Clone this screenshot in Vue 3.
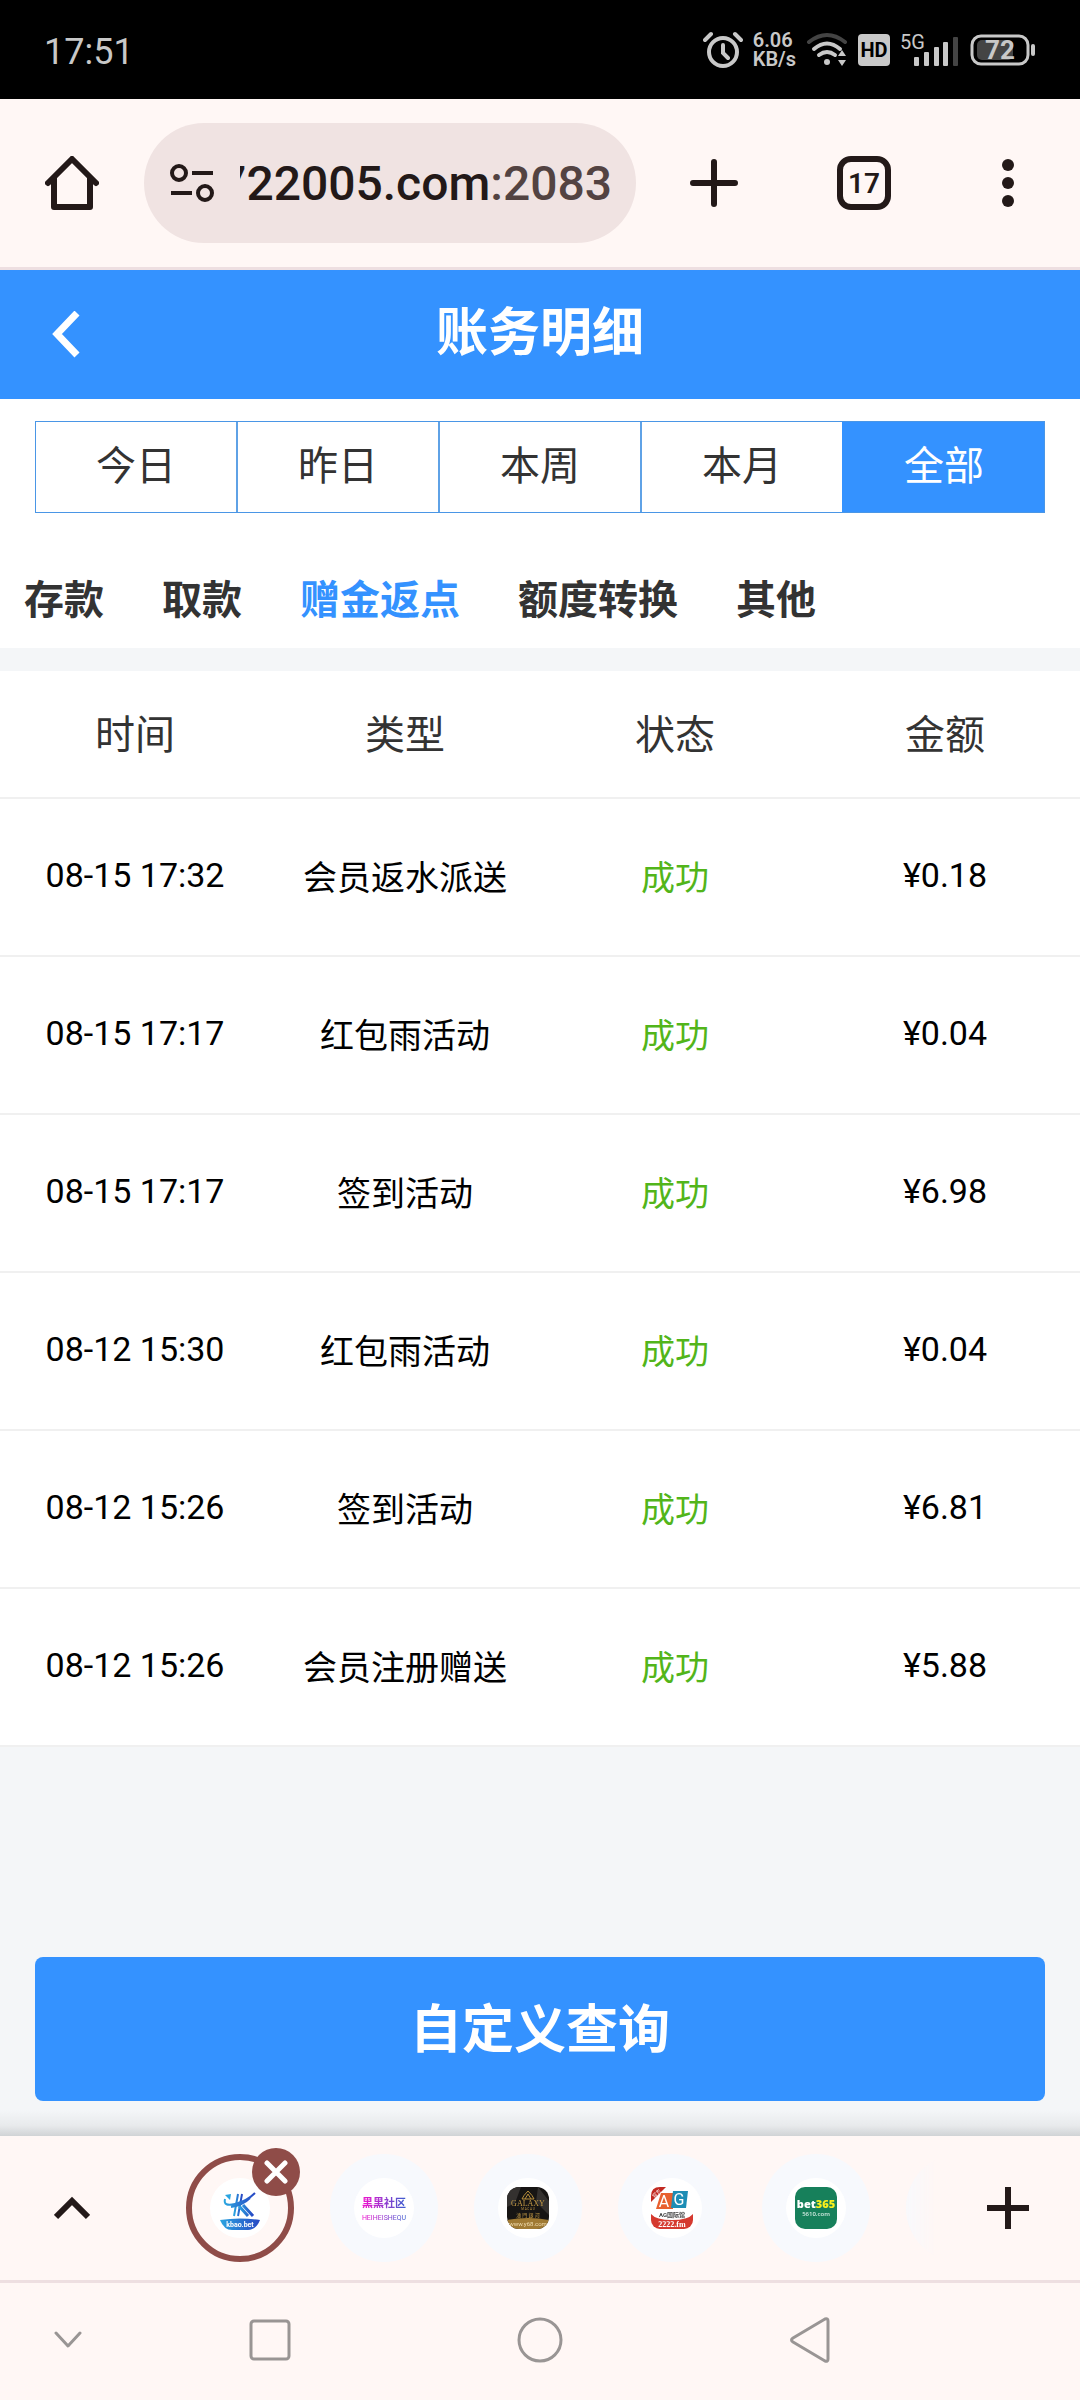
<script setup>
import { ref } from "vue";

const periods = ["今日", "昨日", "本周", "本月", "全部"];
const activePeriod = ref("全部");

const categories = ["存款", "取款", "赠金返点", "额度转换", "其他"];
const activeCategory = ref("赠金返点");

const columns = ["时间", "类型", "状态", "金额"];

const records = [
    { id: 1, time: "08-15 17:32", type: "会员返水派送", status: "成功", amount: "¥0.18" },
    { id: 2, time: "08-15 17:17", type: "红包雨活动", status: "成功", amount: "¥0.04" },
    { id: 3, time: "08-15 17:17", type: "签到活动", status: "成功", amount: "¥6.98" },
    { id: 4, time: "08-12 15:30", type: "红包雨活动", status: "成功", amount: "¥0.04" },
    { id: 5, time: "08-12 15:26", type: "签到活动", status: "成功", amount: "¥6.81" },
    { id: 6, time: "08-12 15:26", type: "会员注册赠送", status: "成功", amount: "¥5.88" }
];
</script>

<template>
  <div class="screen">
    <div class="status">
      <span class="status__time">17:51</span>
      <div class="status__icons">
        <svg width="40" height="38" viewBox="0 0 40 38" fill="none" stroke="#c8c8c8" stroke-width="4" stroke-linecap="round">
          <circle cx="20" cy="21" r="14" />
          <path d="M20 14v8l5 5M2 9l6-6M38 9l-6-6" />
        </svg>
        <div class="status__speed">
          <span>6.06</span>
          <span>KB/s</span>
        </div>
        <svg width="42" height="36" viewBox="0 0 42 36" fill="none" stroke-linecap="round" stroke-width="4">
          <path d="M3 10Q21 -4 39 10" stroke="#444" />
          <path d="M8 17Q21 6 34 17M13 23Q21 17 29 23" stroke="#c8c8c8" />
          <circle cx="21" cy="30" r="3" fill="#c8c8c8" />
          <path d="M32 24l4-6 4 6zM32 28l4 6 4-6z" fill="#c8c8c8" />
        </svg>
        <svg width="32" height="32" viewBox="0 0 32 32">
          <rect width="32" height="32" rx="4" fill="#c8c8c8" />
          <text x="16" y="23" text-anchor="middle" font-size="20" font-weight="700" fill="#000">HD</text>
        </svg>
        <svg width="60" height="38" viewBox="0 0 60 38">
          <text x="0" y="18" font-size="20" fill="#c8c8c8">5G</text>
          <g fill="#c8c8c8">
            <rect x="14" y="26" width="5" height="9" rx="1" />
            <rect x="24" y="21" width="5" height="14" rx="1" />
            <rect x="34" y="16" width="5" height="19" rx="1" />
            <rect x="43" y="11" width="5" height="24" rx="1" />
          </g>
          <rect x="53" y="6" width="5" height="29" rx="1" fill="#444" />
        </svg>
        <svg width="66" height="32" viewBox="0 0 66 32">
          <rect x="2" y="2" width="56" height="28" rx="9" fill="none" stroke="#c8c8c8" stroke-width="3" />
          <rect x="7" y="6" width="36" height="20" rx="5" fill="#444" />
          <rect x="61" y="10" width="4" height="12" rx="2" fill="#c8c8c8" />
          <text x="30" y="25" text-anchor="middle" font-size="26" font-weight="700" fill="#c8c8c8">72</text>
        </svg>
      </div>
    </div>

    <div class="browser">
      <button class="browser__button" type="button" aria-label="Home">
        <svg width="54" height="54" viewBox="0 0 54 54" fill="none" stroke="#231918" stroke-width="6" stroke-linecap="round" stroke-linejoin="round">
          <path d="M3 27L27 3l24 24M9 22v29h36V22" />
        </svg>
      </button>
      <button class="browser__address" type="button">
        <svg width="48" height="42" viewBox="0 0 48 42" fill="none" stroke="#231918" stroke-width="4">
          <circle cx="11" cy="11" r="7" />
          <path d="M24 11h21M3 31h21" />
          <circle cx="37" cy="31" r="7" />
        </svg>
        <span class="browser__url">
          <span>722005.com</span><span class="browser__port">:2083</span>
        </span>
      </button>
      <button class="browser__button browser__button--add" type="button" aria-label="New tab">
        <svg width="48" height="48" viewBox="0 0 48 48" stroke="#231918" stroke-width="6" stroke-linecap="round">
          <path d="M24 3v42M3 24h42" />
        </svg>
      </button>
      <button class="browser__button" type="button" aria-label="Tabs">
        <span class="browser__tabs">17</span>
      </button>
      <button class="browser__button" type="button" aria-label="Menu">
        <svg width="12" height="50" viewBox="0 0 12 50" fill="#231918">
          <circle cx="6" cy="7" r="6" />
          <circle cx="6" cy="25" r="6" />
          <circle cx="6" cy="43" r="6" />
        </svg>
      </button>
    </div>

    <main class="page">
      <header class="header">
        <button class="header__back" type="button" aria-label="返回">
          <svg width="28" height="48" viewBox="0 0 28 48" fill="none" stroke="#fff" stroke-width="7">
            <path d="M25 2L5 23l20 21" />
          </svg>
        </button>
        <h1 class="header__title">账务明细</h1>
      </header>

      <div class="filters">
        <div class="periods">
          <button
            v-for="period in periods"
            :key="period"
            class="periods__item"
            :class="{ 'periods__item--active': period === activePeriod }"
            type="button"
            @click="activePeriod = period"
          >
            {{ period }}
          </button>
        </div>
        <div class="categories">
          <button
            v-for="category in categories"
            :key="category"
            class="categories__item"
            :class="{ 'categories__item--active': category === activeCategory }"
            type="button"
            @click="activeCategory = category"
          >
            {{ category }}
          </button>
        </div>
      </div>

      <table class="records">
        <thead>
          <tr>
            <th v-for="column in columns" :key="column">{{ column }}</th>
          </tr>
        </thead>
        <tbody>
          <tr v-for="record in records" :key="record.id">
            <td>{{ record.time }}</td>
            <td>{{ record.type }}</td>
            <td class="records__status">{{ record.status }}</td>
            <td>{{ record.amount }}</td>
          </tr>
        </tbody>
      </table>

      <div class="actions">
        <button class="actions__query" type="button">自定义查询</button>
      </div>
      <div class="shade"></div>
    </main>

    <div class="tabstrip">
      <button class="tabstrip__button" type="button" aria-label="Expand">
        <svg width="36" height="24" viewBox="0 0 36 24" fill="none" stroke="#231918" stroke-width="6">
          <path d="M2 21L18 5l16 16" />
        </svg>
      </button>
      <div class="tabstrip__list">
        <div class="tabstrip__item tabstrip__item--active">
          <svg width="60" height="60" viewBox="0 0 60 60">
            <defs>
              <linearGradient id="kbao" x1="0" x2="1">
                <stop offset="0" stop-color="#2ba5e0" />
                <stop offset="1" stop-color="#2747c4" />
              </linearGradient>
            </defs>
            <circle cx="30" cy="30" r="30" fill="#fff" />
            <g fill="none" stroke="url(#kbao)">
              <path d="M28 16l-4 22M32 16l-4 22" stroke-width="2" />
              <path d="M33 27l10 11M29 28l9 10" stroke-width="3" />
              <path d="M15 21q-2 8 10 5 12-3 20-11M21 29q12-2 19-9" stroke-width="2" />
            </g>
            <path d="M15 17l6-1-1 6z" fill="#2ba5e0" />
            <path d="M10 42q20-3 40 0-4 10-12 10H22q-8 0-12-10z" fill="url(#kbao)" />
            <text x="30" y="49" text-anchor="middle" font-size="7" font-weight="700" fill="#fff">kbao.bet</text>
          </svg>
          <button class="tabstrip__close" type="button" aria-label="Close tab">
            <svg width="24" height="24" viewBox="0 0 24 24" stroke="#fff" stroke-width="5" stroke-linecap="round">
              <path d="M3 3l18 18M21 3L3 21" />
            </svg>
          </button>
        </div>
        <div class="tabstrip__item">
          <svg width="60" height="60" viewBox="0 0 60 60">
            <defs>
              <linearGradient id="heihei" x1="0" x2="1">
                <stop offset="0" stop-color="#f312ce" />
                <stop offset="1" stop-color="#3a5fd0" />
              </linearGradient>
            </defs>
            <circle cx="30" cy="30" r="30" fill="#fff" />
            <text x="30" y="29" text-anchor="middle" font-size="11" font-weight="700" fill="url(#heihei)">黑黑社区</text>
            <text x="30" y="42" text-anchor="middle" font-size="7" fill="url(#heihei)">HEIHEISHEQU</text>
          </svg>
        </div>
        <div class="tabstrip__item">
          <svg width="60" height="60" viewBox="0 0 60 60">
            <defs>
              <clipPath id="galaxy"><rect x="9" y="9" width="42" height="42" rx="12" /></clipPath>
            </defs>
            <circle cx="30" cy="30" r="30" fill="#fff" />
            <g clip-path="url(#galaxy)">
              <rect x="9" y="9" width="42" height="42" fill="#171514" />
              <path d="M9 9h14l-6 16-8 4zM40 9l11 14v14L38 24z" fill="#34312f" />
              <path d="M9 42q21-4 42 0v9H9z" fill="#a07a33" />
            </g>
            <path d="M24 21q1-3 6-8 5 5 6 8zM27 21l3-5 3 5" fill="none" stroke="#b98f3c" stroke-width="1" />
            <g text-anchor="middle" fill="#c49a45">
              <text class="serif" x="30" y="28" font-size="8">GALAXY</text>
              <text x="30" y="32" font-size="3">M A C A U</text>
              <text x="30" y="39" font-size="5">澳 門 銀 河</text>
              <text x="30" y="48" font-size="6" fill="#f0ddb0">www.y68.com</text>
            </g>
          </svg>
        </div>
        <div class="tabstrip__item">
          <svg width="60" height="60" viewBox="0 0 60 60">
            <defs>
              <clipPath id="ag"><rect x="9" y="9" width="42" height="42" rx="9" /></clipPath>
            </defs>
            <circle cx="30" cy="30" r="30" fill="#fff" />
            <g clip-path="url(#ag)">
              <path d="M9 36q5 6 21 6t21-6v15H9z" fill="#d5392f" />
            </g>
            <path d="M19 15h12v16H14z" fill="#e8602f" />
            <path d="M31 13h15l-2 17H29z" fill="#1d8db5" />
            <path d="M9 24V18q0-9 9-9h6z" fill="#c22a22" />
            <g text-anchor="middle">
              <text x="22" y="29" font-size="16" fill="#fff">A</text>
              <text x="37" y="27" font-size="16" fill="#fff">G</text>
              <text x="30" y="39" font-size="6" font-weight="700" fill="#444">AG国际馆</text>
              <text class="serif" x="30" y="49" font-size="8" font-weight="700" fill="#fff">2222.fm</text>
              <text x="15" y="17" font-size="5" fill="#fff" transform="rotate(-45 15 16)">官方</text>
            </g>
          </svg>
        </div>
        <div class="tabstrip__item">
          <svg class="bet" width="60" height="60" viewBox="0 0 60 60">
            <circle cx="30" cy="30" r="30" fill="#fff" />
            <rect x="9" y="9" width="42" height="42" rx="10" fill="#17805b" />
            <text x="30" y="30" text-anchor="middle" font-size="11" font-weight="800" fill="#fff">bet<tspan fill="#f9ef1c">365</tspan></text>
            <text x="30" y="38" text-anchor="middle" font-size="6" font-weight="600" fill="#d5ebe2">5610.com</text>
          </svg>
        </div>
        <div class="tabstrip__item"></div>
      </div>
      <button class="tabstrip__button" type="button" aria-label="New tab">
        <svg width="42" height="42" viewBox="0 0 42 42" stroke="#231918" stroke-width="6">
          <path d="M21 0v42M0 21h42" />
        </svg>
      </button>
    </div>

    <nav class="sysnav">
      <button type="button" aria-label="Hide">
        <svg width="28" height="18" viewBox="0 0 28 18">
          <path d="M2 2l12 13L26 2" />
        </svg>
      </button>
      <button type="button" aria-label="Recent">
        <svg width="42" height="42" viewBox="0 0 42 42">
          <rect x="2" y="2" width="38" height="38" rx="3" />
        </svg>
      </button>
      <button type="button" aria-label="Home">
        <svg width="46" height="46" viewBox="0 0 46 46">
          <circle cx="23" cy="23" r="21" />
        </svg>
      </button>
      <button type="button" aria-label="Back">
        <svg width="42" height="46" viewBox="0 0 42 46">
          <path d="M36 2q3-1 3 2v38q0 3-3 2L4 25q-3-2 0-4z" />
        </svg>
      </button>
    </nav>
  </div>
</template>

<style>
body {
  margin: 0;
  background: #fff7f5;
}
</style>

<style scoped>
.screen {
  display: flex;
  flex-direction: column;
  min-height: 100vh;
  font-family: Roboto, "Noto Sans CJK SC", sans-serif;
  color: #333;
}

button {
  display: flex;
  align-items: center;
  justify-content: center;
  margin: 0;
  padding: 0;
  border: 0;
  background: none;
  color: inherit;
  font: inherit;
  cursor: pointer;
}

svg {
  display: block;
  flex: none;
}

.serif {
  font-family: "Liberation Serif", serif;
}

.status {
  display: flex;
  align-items: center;
  justify-content: space-between;
  height: 99px;
  padding: 0 44px;
  background: #000;
  color: #c8c8c8;
}

.status__time {
  padding-top: 4px;
  font-size: 36px;
}

.status__icons {
  display: flex;
  align-items: center;
  gap: 10px;
}

.status__speed {
  display: flex;
  flex-direction: column;
  font-size: 20px;
  font-weight: 600;
  line-height: 19px;
}

.browser {
  display: flex;
  align-items: center;
  height: 168px;
  border-bottom: 3px solid #eedfe1;
  background: #fff7f5;
  color: #231918;
}

.browser__button {
  width: 144px;
  height: 144px;
}

.browser__button--add {
  width: 156px;
}

.browser__address {
  flex: 1;
  gap: 24px;
  min-width: 0;
  height: 120px;
  padding: 0 24px;
  border-radius: 60px;
  background: #f0e3e2;
}

.browser__url {
  display: flex;
  flex: 1;
  justify-content: flex-end;
  min-width: 0;
  overflow: hidden;
  font-size: 48px;
  font-weight: 500;
}

.browser__port {
  color: #534342;
}

.browser__tabs {
  display: flex;
  align-items: center;
  justify-content: center;
  box-sizing: border-box;
  width: 54px;
  height: 54px;
  border: 6px solid #231918;
  border-radius: 14px;
  font-size: 28px;
  font-weight: 600;
}

.page {
  display: flex;
  flex: 1;
  flex-direction: column;
  background: #f4f6f8;
}

.header {
  display: grid;
  grid-template-columns: 132px 1fr 132px;
  align-items: center;
  height: 129px;
  background: #3492ff;
  color: #fff;
}

.header__back {
  height: 100%;
}

.header__title {
  margin: 0;
  padding-bottom: 12px;
  font-size: 52px;
  font-weight: 700;
  text-align: center;
}

.filters {
  padding-top: 22px;
  background: #fff;
}

.periods {
  display: flex;
  height: 90px;
  margin: 0 35px;
  border: 1px solid #4a96e6;
}

.periods__item {
  flex: 1;
  padding-bottom: 8px;
  font-size: 40px;
}

.periods__item + .periods__item {
  border-left: 2px solid #5fa2e6;
}

.periods .periods__item--active {
  border-color: #3492ff;
  background: #3492ff;
  color: #fff;
}

.categories {
  display: flex;
  gap: 58px;
  height: 135px;
  padding: 0 24px;
}

.categories__item {
  padding-top: 32px;
  font-size: 40px;
  font-weight: 700;
}

.categories__item--active {
  color: #3492ff;
}

.records {
  width: 100%;
  margin-top: 23px;
  border-collapse: separate;
  border-spacing: 0;
  table-layout: fixed;
  background: #fff;
  text-align: center;
}

.records th,
.records td {
  box-sizing: border-box;
  height: 158px;
  padding: 0 0 4px;
  border-bottom: 2px solid #f0f0f0;
  color: #000;
  font-size: 34px;
  font-weight: 400;
}

.records th {
  height: 128px;
  color: #333;
  font-size: 40px;
}

.records .records__status {
  color: #52b51a;
}

.actions {
  margin-top: auto;
  padding: 48px 35px 9px;
}

.actions__query {
  width: 100%;
  height: 144px;
  padding-bottom: 8px;
  border-radius: 8px;
  background: #3492ff;
  color: #fff;
  font-size: 52px;
  font-weight: 700;
}

.shade {
  height: 26px;
  background: linear-gradient(#f4f6f8, #e8eaec 60%, #d0d3d5);
}

.tabstrip {
  display: flex;
  align-items: center;
  height: 144px;
  border-bottom: 3px solid #eedfe1;
  background: #fff7f5;
}

.tabstrip__button {
  width: 144px;
  height: 144px;
}

.tabstrip__list {
  display: flex;
  flex: 1;
  align-items: center;
  gap: 36px;
  box-sizing: border-box;
  min-width: 0;
  height: 144px;
  padding-left: 42px;
  overflow: hidden;
  mask-image: linear-gradient(to right, #000 calc(100% - 36px), transparent);
}

.tabstrip__item {
  position: relative;
  display: flex;
  flex: none;
  align-items: center;
  justify-content: center;
  box-sizing: border-box;
  width: 108px;
  height: 108px;
  border-radius: 50%;
  background: #f7f9fd;
}

.tabstrip__item--active {
  border: 6px solid #8f4c48;
  background: none;
}

.tabstrip__close {
  position: absolute;
  top: -12px;
  right: -12px;
  width: 48px;
  height: 48px;
  border-radius: 50%;
  background: #8f4c48;
}

.bet {
  font-family: "Open Sans", sans-serif;
}

.sysnav {
  display: grid;
  grid-template-columns: 1fr 2fr 2fr 2fr 1fr;
  box-sizing: border-box;
  height: 117px;
  padding-bottom: 4px;
  background: #fff7f5;
}

.sysnav svg {
  fill: none;
  stroke: #999594;
  stroke-width: 3;
  stroke-linecap: round;
  stroke-linejoin: round;
}
</style>
